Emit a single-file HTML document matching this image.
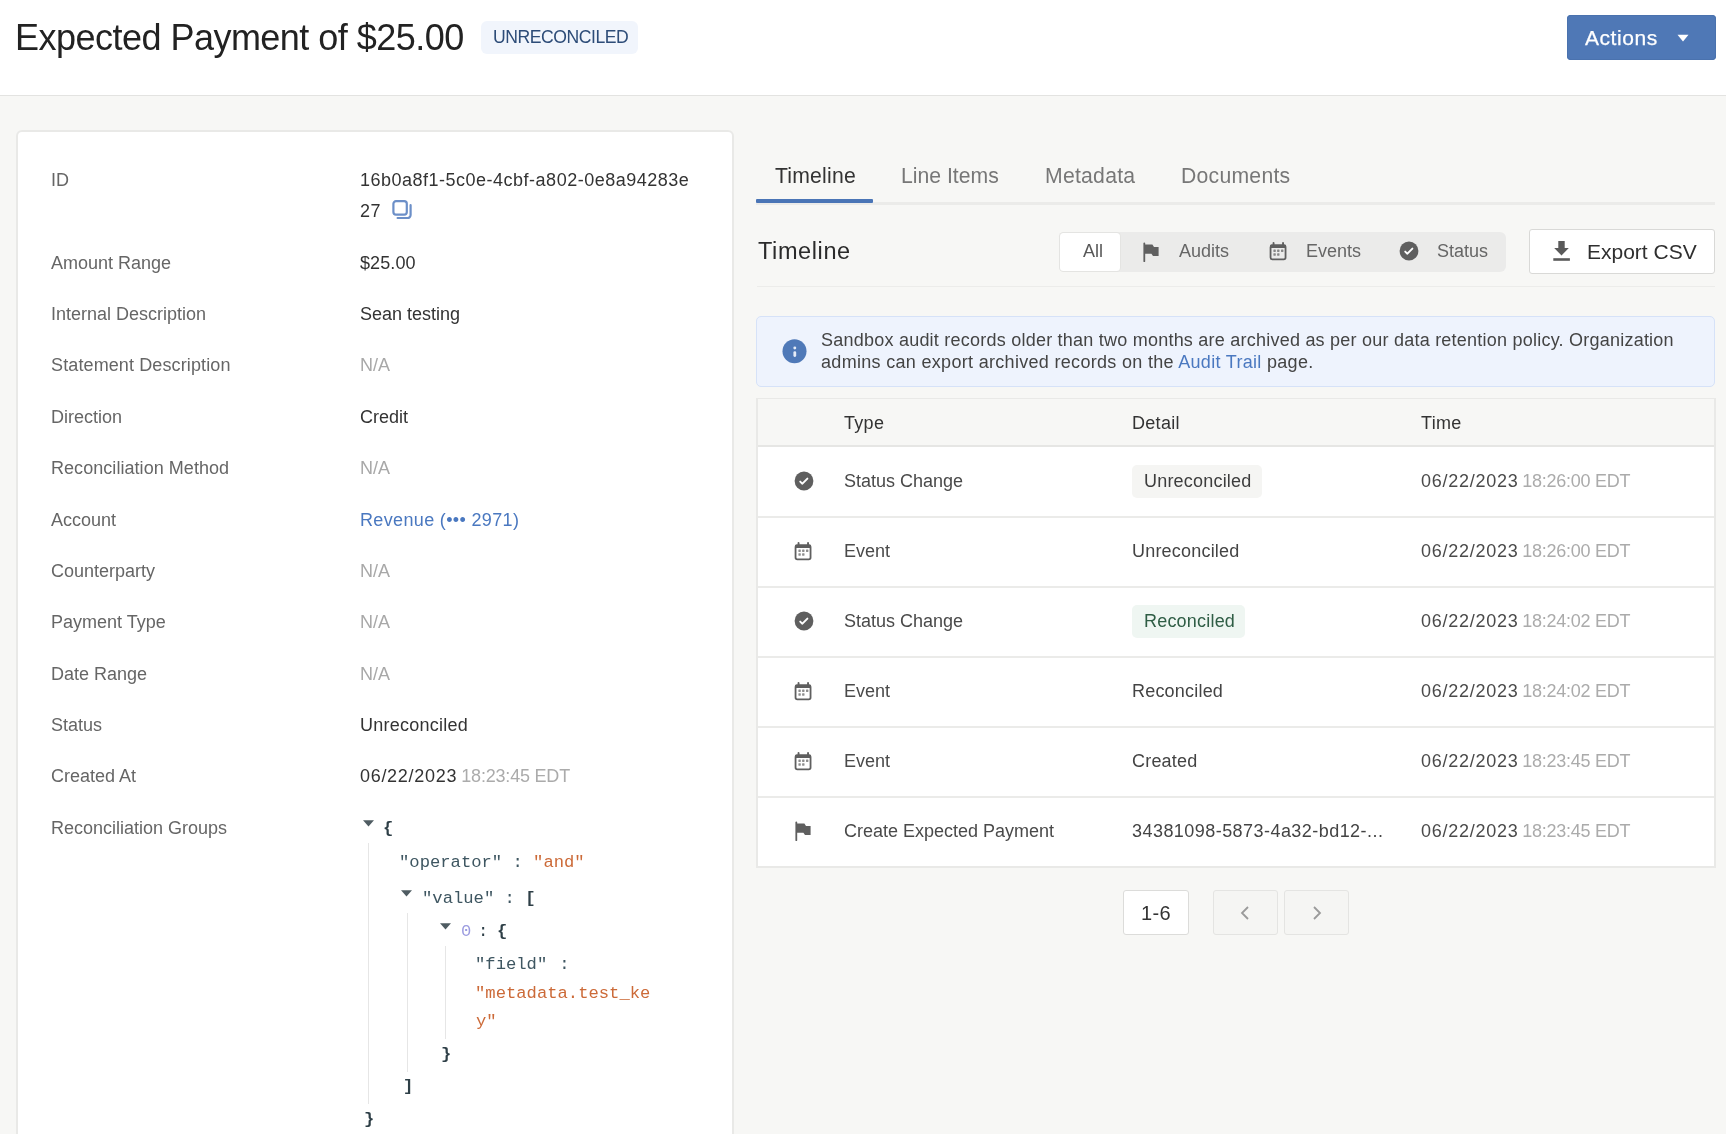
<!DOCTYPE html>
<html><head><meta charset="utf-8"><title>Expected Payment</title>
<style>
html,body{margin:0;padding:0;}
body{width:1726px;height:1134px;overflow:hidden;position:relative;background:#f7f7f5;font-family:"Liberation Sans",sans-serif;}
.r{position:absolute;}
.ts,.tm{position:absolute;white-space:nowrap;will-change:transform;}
.ts{font-family:"Liberation Sans",sans-serif;}
.tm{font-family:"Liberation Mono",monospace;}
</style></head><body>
<div class="r" style="left:0px;top:0px;width:1726px;height:95px;background:#fff;border-bottom:1px solid #e3e3e1;"></div>
<div class="ts " style="left:14.60px;top:20.33px;font-size:36px;line-height:36px;color:#222;letter-spacing:-0.52px;">Expected Payment of $25.00</div>
<div class="r" style="left:481px;top:21px;width:157px;height:33px;background:#f1f5fc;border-radius:6px;"></div>
<div class="ts " style="left:492.70px;top:29.30px;font-size:17.6px;line-height:17.6px;color:#2d4c78;letter-spacing:-0.45px;">UNRECONCILED</div>
<div class="r" style="left:1567px;top:15px;width:149px;height:45px;background:#4f78b6;border-radius:4px;box-shadow:0 0 0 1px #4a72ae inset;"></div>
<div class="ts " style="left:1585.00px;top:27.22px;font-size:21px;line-height:21px;color:#ffffff;letter-spacing:0.55px;-webkit-text-stroke:0.25px #fff;">Actions</div>
<svg class="r" style="left:1677px;top:34px" width="12" height="8" viewBox="0 0 12 8"><path d="M0.5 0.8h11L6 7.6z" fill="#fff"/></svg>
<div class="r" style="left:15.5px;top:130px;width:718px;height:1100px;background:#fff;border:2px solid #e9e9e7;border-radius:6px;box-sizing:border-box;"></div>
<div class="ts " style="left:51.00px;top:170.76px;font-size:18px;line-height:18px;color:#666;">ID</div>
<div class="ts " style="left:359.50px;top:170.76px;font-size:18px;line-height:18px;color:#333;letter-spacing:0.5px;">16b0a8f1-5c0e-4cbf-a802-0e8a94283e</div>
<div class="ts " style="left:359.50px;top:201.76px;font-size:18px;line-height:18px;color:#333;letter-spacing:0.42px;">27</div>
<svg class="r" style="left:391px;top:199px" width="22" height="22" viewBox="0 0 22 22"><rect x="2.4" y="2.2" width="13.4" height="13.4" rx="2.6" fill="none" stroke="#6c8fc8" stroke-width="2.2"/><path d="M19.6 6.2v9.8a3 3 0 0 1-3 3H6.6" fill="none" stroke="#6c8fc8" stroke-width="2.2" stroke-linecap="round"/></svg>
<div class="ts " style="left:51.00px;top:253.76px;font-size:18px;line-height:18px;color:#666;">Amount Range</div>
<div class="ts " style="left:359.50px;top:253.76px;font-size:18px;line-height:18px;color:#333;letter-spacing:0.1px;">$25.00</div>
<div class="ts " style="left:51.00px;top:305.11px;font-size:18px;line-height:18px;color:#666;">Internal Description</div>
<div class="ts " style="left:359.50px;top:305.11px;font-size:18px;line-height:18px;color:#333;">Sean testing</div>
<div class="ts " style="left:51.00px;top:356.46px;font-size:18px;line-height:18px;color:#666;letter-spacing:0.12px;">Statement Description</div>
<div class="ts " style="left:359.50px;top:356.46px;font-size:18px;line-height:18px;color:#a8a8a8;">N/A</div>
<div class="ts " style="left:51.00px;top:407.81px;font-size:18px;line-height:18px;color:#666;">Direction</div>
<div class="ts " style="left:359.50px;top:407.81px;font-size:18px;line-height:18px;color:#333;">Credit</div>
<div class="ts " style="left:51.00px;top:459.16px;font-size:18px;line-height:18px;color:#666;letter-spacing:0.05px;">Reconciliation Method</div>
<div class="ts " style="left:359.50px;top:459.16px;font-size:18px;line-height:18px;color:#a8a8a8;">N/A</div>
<div class="ts " style="left:51.00px;top:510.51px;font-size:18px;line-height:18px;color:#666;">Account</div>
<div class="ts " style="left:359.50px;top:510.51px;font-size:18px;line-height:18px;color:#4a78c0;letter-spacing:0.35px;">Revenue (&bull;&bull;&bull; 2971)</div>
<div class="ts " style="left:51.00px;top:561.86px;font-size:18px;line-height:18px;color:#666;">Counterparty</div>
<div class="ts " style="left:359.50px;top:561.86px;font-size:18px;line-height:18px;color:#a8a8a8;">N/A</div>
<div class="ts " style="left:51.00px;top:613.21px;font-size:18px;line-height:18px;color:#666;">Payment Type</div>
<div class="ts " style="left:359.50px;top:613.21px;font-size:18px;line-height:18px;color:#a8a8a8;">N/A</div>
<div class="ts " style="left:51.00px;top:664.56px;font-size:18px;line-height:18px;color:#666;">Date Range</div>
<div class="ts " style="left:359.50px;top:664.56px;font-size:18px;line-height:18px;color:#a8a8a8;">N/A</div>
<div class="ts " style="left:51.00px;top:715.91px;font-size:18px;line-height:18px;color:#666;">Status</div>
<div class="ts " style="left:359.50px;top:715.91px;font-size:18px;line-height:18px;color:#333;letter-spacing:0.25px;">Unreconciled</div>
<div class="ts " style="left:51.00px;top:767.26px;font-size:18px;line-height:18px;color:#666;">Created At</div>
<div class="ts " style="left:359.50px;top:767.26px;font-size:18px;line-height:18px;color:#333;letter-spacing:0.7px;">06/22/2023<span style="color:#ababab;letter-spacing:-0.2px;margin-left:4.2px">18:23:45 EDT</span></div>
<div class="ts " style="left:51.00px;top:818.61px;font-size:18px;line-height:18px;color:#666;">Reconciliation Groups</div>
<svg class="r" style="left:362.5px;top:819.5px" width="11" height="7" viewBox="0 0 11 7"><path d="M0 0.2h11L5.5 6.6z" fill="#4f5c62"/></svg>
<div class="tm " style="left:383.00px;top:819.82px;font-size:17.2px;line-height:17.2px;color:#2e3f47;font-weight:bold;">{</div>
<div class="r" style="left:367.5px;top:843px;width:1px;height:261px;background:#e6e6e6;"></div>
<div class="tm " style="left:398.50px;top:853.82px;font-size:17.2px;line-height:17.2px;color:#3e5661;">"operator" : <span style="color:#cc6a38">"and"</span></div>
<svg class="r" style="left:400.5px;top:889.5px" width="11" height="7" viewBox="0 0 11 7"><path d="M0 0.2h11L5.5 6.6z" fill="#4f5c62"/></svg>
<div class="tm " style="left:422.00px;top:890.32px;font-size:17.2px;line-height:17.2px;color:#3e5661;">"value" : <span style="font-weight:bold;color:#2e3f47">[</span></div>
<div class="r" style="left:406.5px;top:913px;width:1px;height:159px;background:#e6e6e6;"></div>
<svg class="r" style="left:439.5px;top:922.5px" width="11" height="7" viewBox="0 0 11 7"><path d="M0 0.2h11L5.5 6.6z" fill="#4f5c62"/></svg>
<div class="tm " style="left:461.00px;top:923.32px;font-size:17.2px;line-height:17.2px;color:#9c9ce0;">0</div>
<div class="tm " style="left:478.20px;top:923.32px;font-size:17.2px;line-height:17.2px;color:#2e3f47;">:</div>
<div class="tm " style="left:496.80px;top:923.32px;font-size:17.2px;line-height:17.2px;color:#2e3f47;font-weight:bold;">{</div>
<div class="r" style="left:445px;top:946px;width:1px;height:93px;background:#e6e6e6;"></div>
<div class="tm " style="left:474.80px;top:955.82px;font-size:17.2px;line-height:17.2px;color:#3e5661;">"field" <span style="margin-left:1.8px">:</span></div>
<div class="tm " style="left:474.80px;top:984.82px;font-size:17.2px;line-height:17.2px;color:#cc6a38;">"metadata.test_ke</div>
<div class="tm " style="left:476.00px;top:1013.42px;font-size:17.2px;line-height:17.2px;color:#cc6a38;">y"</div>
<div class="tm " style="left:440.50px;top:1045.82px;font-size:17.2px;line-height:17.2px;color:#2e3f47;font-weight:bold;">}</div>
<div class="tm " style="left:402.50px;top:1078.32px;font-size:17.2px;line-height:17.2px;color:#2e3f47;font-weight:bold;">]</div>
<div class="tm " style="left:363.50px;top:1110.82px;font-size:17.2px;line-height:17.2px;color:#2e3f47;font-weight:bold;">}</div>
<div class="r" style="left:756px;top:202px;width:959px;height:3px;background:#ebebe9;"></div>
<div class="r" style="left:756px;top:199px;width:117px;height:4px;background:#4a75b6;border-radius:1px;"></div>
<div class="ts " style="left:775.00px;top:165.35px;font-size:21.2px;line-height:21.2px;color:#333;letter-spacing:0.2px;">Timeline</div>
<div class="ts " style="left:901.00px;top:165.35px;font-size:21.2px;line-height:21.2px;color:#777;letter-spacing:0.0px;">Line Items</div>
<div class="ts " style="left:1045.00px;top:165.35px;font-size:21.2px;line-height:21.2px;color:#777;letter-spacing:0.25px;">Metadata</div>
<div class="ts " style="left:1181.00px;top:165.35px;font-size:21.2px;line-height:21.2px;color:#777;letter-spacing:0.25px;">Documents</div>
<div class="ts " style="left:757.50px;top:239.61px;font-size:23.5px;line-height:23.5px;color:#2b2b2b;letter-spacing:0.6px;">Timeline</div>
<div class="r" style="left:757px;top:286px;width:958px;height:1px;background:#ececea;"></div>
<div class="r" style="left:1059px;top:231.5px;width:447px;height:40px;background:#ebebea;border-radius:6px;"></div>
<div class="r" style="left:1060px;top:232.5px;width:60px;height:38px;background:#fff;border-radius:3.5px;box-shadow:0 0 0 1px #e4e4e2;"></div>
<div class="ts " style="left:1083.00px;top:242.16px;font-size:18px;line-height:18px;color:#585858;">All</div>
<svg class="r" style="left:1142.5px;top:241.5px" width="18" height="20" viewBox="0 0 18 20"><path d="M1.3 1.4v17.8" stroke="#606060" stroke-width="1.8" stroke-linecap="round"/><path d="M1.6 2.6h7.8l1.6 2.3h4.6v9.1h-5.6l-1.6-2.3H1.6z" fill="#606060"/></svg>
<div class="ts " style="left:1179.00px;top:242.26px;font-size:18px;line-height:18px;color:#666;">Audits</div>
<svg class="r" style="left:1269px;top:241px" width="18" height="20" viewBox="0 0 18 20"><rect x="1.55" y="4.4" width="15" height="13.9" rx="1.8" fill="none" stroke="#5f5f5f" stroke-width="1.8"/><rect x="1.2" y="3.6" width="15.7" height="3.3" rx="1" fill="#5f5f5f"/><rect x="3.6" y="1" width="1.9" height="3.4" rx="0.9" fill="#5f5f5f"/><rect x="13.1" y="1" width="1.9" height="3.4" rx="0.9" fill="#5f5f5f"/><g fill="#5f5f5f" opacity="0.7"><rect x="4.4" y="8.6" width="2.4" height="2.4" rx="0.4"/><rect x="8.1" y="8.6" width="2.4" height="2.4" rx="0.4"/><rect x="12" y="8.6" width="2.4" height="2.4" rx="0.4"/><rect x="4.4" y="12.3" width="2.4" height="2.4" rx="0.4"/><rect x="8.1" y="12.3" width="2.4" height="2.4" rx="0.4"/></g></svg>
<div class="ts " style="left:1305.80px;top:242.26px;font-size:18px;line-height:18px;color:#666;">Events</div>
<svg class="r" style="left:1398.5px;top:241px" width="20" height="20" viewBox="0 0 20 20"><circle cx="10" cy="10" r="9.4" fill="#5f5f5f"/><path d="M6.2 10.6L8.4 12.7L13.4 7.6" fill="none" stroke="#fff" stroke-width="1.9" stroke-linecap="round" stroke-linejoin="round"/></svg>
<div class="ts " style="left:1436.50px;top:242.26px;font-size:18px;line-height:18px;color:#666;">Status</div>
<div class="r" style="left:1529px;top:229px;width:186px;height:45px;background:#fff;border:1px solid #d9d9d7;border-radius:3px;box-sizing:border-box;"></div>
<svg class="r" style="left:1552px;top:240px" width="20" height="22" viewBox="0 0 20 22"><path d="M6.3 0.9H12.7V8H16.8L9.5 15.6L2.2 8H6.3Z" fill="#5a5a5a"/><rect x="1.3" y="18.2" width="16.6" height="2.6" fill="#5a5a5a"/></svg>
<div class="ts " style="left:1587.00px;top:241.22px;font-size:21px;line-height:21px;color:#2f2f2f;">Export CSV</div>
<div class="r" style="left:756px;top:316px;width:959px;height:71px;background:#eef3fd;border:1px solid #d6e2f8;border-radius:5px;box-sizing:border-box;"></div>
<svg class="r" style="left:782px;top:339px" width="25" height="25" viewBox="0 0 25 25"><circle cx="12.5" cy="12.3" r="12" fill="#4f79b8"/><circle cx="12.8" cy="9" r="1.45" fill="#e6ecf7"/><rect x="11.4" y="12.3" width="2.8" height="5.6" rx="1.3" fill="#e6ecf7"/></svg>
<div class="ts " style="left:821.00px;top:331.06px;font-size:18px;line-height:18px;color:#444;letter-spacing:0.23px;white-space:nowrap;">Sandbox audit records older than two months are archived as per our data retention policy. Organization</div>
<div class="ts " style="left:821.00px;top:353.16px;font-size:18px;line-height:18px;color:#444;letter-spacing:0.31px;white-space:nowrap;">admins can export archived records on the <span style="color:#4a78c0">Audit Trail</span> page.</div>
<div class="r" style="left:756px;top:398px;width:960px;height:469.5px;background:#fff;border:2px solid #e9e9e7;box-sizing:border-box;"></div>
<div class="r" style="left:758px;top:399px;width:956px;height:46px;background:#f7f7f5;"></div>
<div class="r" style="left:758px;top:445px;width:956px;height:2px;background:#e6e6e4;"></div>
<div class="ts " style="left:844.30px;top:413.76px;font-size:18px;line-height:18px;color:#333;letter-spacing:0.3px;">Type</div>
<div class="ts " style="left:1132.00px;top:413.76px;font-size:18px;line-height:18px;color:#333;letter-spacing:0.3px;">Detail</div>
<div class="ts " style="left:1421.00px;top:413.76px;font-size:18px;line-height:18px;color:#333;letter-spacing:0.3px;">Time</div>
<svg class="r" style="left:793.5px;top:471.1px" width="20" height="20" viewBox="0 0 20 20"><circle cx="10" cy="10" r="9.4" fill="#5f5f5f"/><path d="M6.2 10.6L8.4 12.7L13.4 7.6" fill="none" stroke="#fff" stroke-width="1.9" stroke-linecap="round" stroke-linejoin="round"/></svg>
<div class="ts " style="left:844.00px;top:472.06px;font-size:18px;line-height:18px;color:#4a4a4a;">Status Change</div>
<div class="r" style="left:1132px;top:465px;width:130px;height:33px;background:#f5f5f3;border-radius:5px;"></div>
<div class="ts " style="left:1144.00px;top:472.06px;font-size:18px;line-height:18px;color:#3d3d3d;letter-spacing:0.2px;">Unreconciled</div>
<div class="ts " style="left:1421.00px;top:472.06px;font-size:18px;line-height:18px;color:#4a4a4a;letter-spacing:0.75px;">06/22/2023<span style="color:#ababab;letter-spacing:-0.25px;margin-left:3.6px">18:26:00 EDT</span></div>
<div class="r" style="left:758px;top:515.5px;width:956px;height:2px;background:#ebebe9;"></div>
<svg class="r" style="left:794px;top:540.5px" width="18" height="20" viewBox="0 0 18 20"><rect x="1.55" y="4.4" width="15" height="13.9" rx="1.8" fill="none" stroke="#5f5f5f" stroke-width="1.8"/><rect x="1.2" y="3.6" width="15.7" height="3.3" rx="1" fill="#5f5f5f"/><rect x="3.6" y="1" width="1.9" height="3.4" rx="0.9" fill="#5f5f5f"/><rect x="13.1" y="1" width="1.9" height="3.4" rx="0.9" fill="#5f5f5f"/><g fill="#5f5f5f" opacity="0.7"><rect x="4.4" y="8.6" width="2.4" height="2.4" rx="0.4"/><rect x="8.1" y="8.6" width="2.4" height="2.4" rx="0.4"/><rect x="12" y="8.6" width="2.4" height="2.4" rx="0.4"/><rect x="4.4" y="12.3" width="2.4" height="2.4" rx="0.4"/><rect x="8.1" y="12.3" width="2.4" height="2.4" rx="0.4"/></g></svg>
<div class="ts " style="left:844.00px;top:542.06px;font-size:18px;line-height:18px;color:#4a4a4a;">Event</div>
<div class="ts " style="left:1132.00px;top:542.06px;font-size:18px;line-height:18px;color:#444;letter-spacing:0.2px;">Unreconciled</div>
<div class="ts " style="left:1421.00px;top:542.06px;font-size:18px;line-height:18px;color:#4a4a4a;letter-spacing:0.75px;">06/22/2023<span style="color:#ababab;letter-spacing:-0.25px;margin-left:3.6px">18:26:00 EDT</span></div>
<div class="r" style="left:758px;top:585.5px;width:956px;height:2px;background:#ebebe9;"></div>
<svg class="r" style="left:793.5px;top:611.1px" width="20" height="20" viewBox="0 0 20 20"><circle cx="10" cy="10" r="9.4" fill="#5f5f5f"/><path d="M6.2 10.6L8.4 12.7L13.4 7.6" fill="none" stroke="#fff" stroke-width="1.9" stroke-linecap="round" stroke-linejoin="round"/></svg>
<div class="ts " style="left:844.00px;top:612.06px;font-size:18px;line-height:18px;color:#4a4a4a;">Status Change</div>
<div class="r" style="left:1132px;top:605px;width:112.5px;height:33px;background:#eff6f2;border-radius:5px;"></div>
<div class="ts " style="left:1144.00px;top:612.06px;font-size:18px;line-height:18px;color:#2f5d45;letter-spacing:0.2px;">Reconciled</div>
<div class="ts " style="left:1421.00px;top:612.06px;font-size:18px;line-height:18px;color:#4a4a4a;letter-spacing:0.75px;">06/22/2023<span style="color:#ababab;letter-spacing:-0.25px;margin-left:3.6px">18:24:02 EDT</span></div>
<div class="r" style="left:758px;top:655.5px;width:956px;height:2px;background:#ebebe9;"></div>
<svg class="r" style="left:794px;top:680.5px" width="18" height="20" viewBox="0 0 18 20"><rect x="1.55" y="4.4" width="15" height="13.9" rx="1.8" fill="none" stroke="#5f5f5f" stroke-width="1.8"/><rect x="1.2" y="3.6" width="15.7" height="3.3" rx="1" fill="#5f5f5f"/><rect x="3.6" y="1" width="1.9" height="3.4" rx="0.9" fill="#5f5f5f"/><rect x="13.1" y="1" width="1.9" height="3.4" rx="0.9" fill="#5f5f5f"/><g fill="#5f5f5f" opacity="0.7"><rect x="4.4" y="8.6" width="2.4" height="2.4" rx="0.4"/><rect x="8.1" y="8.6" width="2.4" height="2.4" rx="0.4"/><rect x="12" y="8.6" width="2.4" height="2.4" rx="0.4"/><rect x="4.4" y="12.3" width="2.4" height="2.4" rx="0.4"/><rect x="8.1" y="12.3" width="2.4" height="2.4" rx="0.4"/></g></svg>
<div class="ts " style="left:844.00px;top:682.06px;font-size:18px;line-height:18px;color:#4a4a4a;">Event</div>
<div class="ts " style="left:1132.00px;top:682.06px;font-size:18px;line-height:18px;color:#444;letter-spacing:0.2px;">Reconciled</div>
<div class="ts " style="left:1421.00px;top:682.06px;font-size:18px;line-height:18px;color:#4a4a4a;letter-spacing:0.75px;">06/22/2023<span style="color:#ababab;letter-spacing:-0.25px;margin-left:3.6px">18:24:02 EDT</span></div>
<div class="r" style="left:758px;top:725.5px;width:956px;height:2px;background:#ebebe9;"></div>
<svg class="r" style="left:794px;top:750.5px" width="18" height="20" viewBox="0 0 18 20"><rect x="1.55" y="4.4" width="15" height="13.9" rx="1.8" fill="none" stroke="#5f5f5f" stroke-width="1.8"/><rect x="1.2" y="3.6" width="15.7" height="3.3" rx="1" fill="#5f5f5f"/><rect x="3.6" y="1" width="1.9" height="3.4" rx="0.9" fill="#5f5f5f"/><rect x="13.1" y="1" width="1.9" height="3.4" rx="0.9" fill="#5f5f5f"/><g fill="#5f5f5f" opacity="0.7"><rect x="4.4" y="8.6" width="2.4" height="2.4" rx="0.4"/><rect x="8.1" y="8.6" width="2.4" height="2.4" rx="0.4"/><rect x="12" y="8.6" width="2.4" height="2.4" rx="0.4"/><rect x="4.4" y="12.3" width="2.4" height="2.4" rx="0.4"/><rect x="8.1" y="12.3" width="2.4" height="2.4" rx="0.4"/></g></svg>
<div class="ts " style="left:844.00px;top:752.06px;font-size:18px;line-height:18px;color:#4a4a4a;">Event</div>
<div class="ts " style="left:1132.00px;top:752.06px;font-size:18px;line-height:18px;color:#444;letter-spacing:0.2px;">Created</div>
<div class="ts " style="left:1421.00px;top:752.06px;font-size:18px;line-height:18px;color:#4a4a4a;letter-spacing:0.75px;">06/22/2023<span style="color:#ababab;letter-spacing:-0.25px;margin-left:3.6px">18:23:45 EDT</span></div>
<div class="r" style="left:758px;top:795.5px;width:956px;height:2px;background:#ebebe9;"></div>
<svg class="r" style="left:795px;top:820.5px" width="18" height="20" viewBox="0 0 18 20"><path d="M1.3 1.4v17.8" stroke="#5f5f5f" stroke-width="1.8" stroke-linecap="round"/><path d="M1.6 2.6h7.8l1.6 2.3h4.6v9.1h-5.6l-1.6-2.3H1.6z" fill="#5f5f5f"/></svg>
<div class="ts " style="left:844.00px;top:822.06px;font-size:18px;line-height:18px;color:#4a4a4a;">Create Expected Payment</div>
<div class="ts " style="left:1132.00px;top:822.06px;font-size:18px;line-height:18px;color:#444;letter-spacing:0.45px;">34381098-5873-4a32-bd12-...</div>
<div class="ts " style="left:1421.00px;top:822.06px;font-size:18px;line-height:18px;color:#4a4a4a;letter-spacing:0.75px;">06/22/2023<span style="color:#ababab;letter-spacing:-0.25px;margin-left:3.6px">18:23:45 EDT</span></div>
<div class="r" style="left:1123px;top:890px;width:66px;height:45px;background:#fff;border:1px solid #dcdcda;border-radius:3px;box-sizing:border-box;"></div>
<div class="ts " style="left:1140.50px;top:903.07px;font-size:20px;line-height:20px;color:#333;letter-spacing:0.4px;">1-6</div>
<div class="r" style="left:1212.5px;top:890px;width:65px;height:45px;background:#f5f5f3;border:1px solid #e4e4e2;border-radius:3px;box-sizing:border-box;"></div>
<div class="r" style="left:1284px;top:890px;width:65px;height:45px;background:#f5f5f3;border:1px solid #e4e4e2;border-radius:3px;box-sizing:border-box;"></div>
<svg class="r" style="left:1238px;top:905px" width="14" height="16" viewBox="0 0 14 16"><path d="M10 2L4 8l6 6" fill="none" stroke="#9a9a9a" stroke-width="1.8"/></svg>
<svg class="r" style="left:1310px;top:905px" width="14" height="16" viewBox="0 0 14 16"><path d="M4 2l6 6-6 6" fill="none" stroke="#9a9a9a" stroke-width="1.8"/></svg>
</body></html>
